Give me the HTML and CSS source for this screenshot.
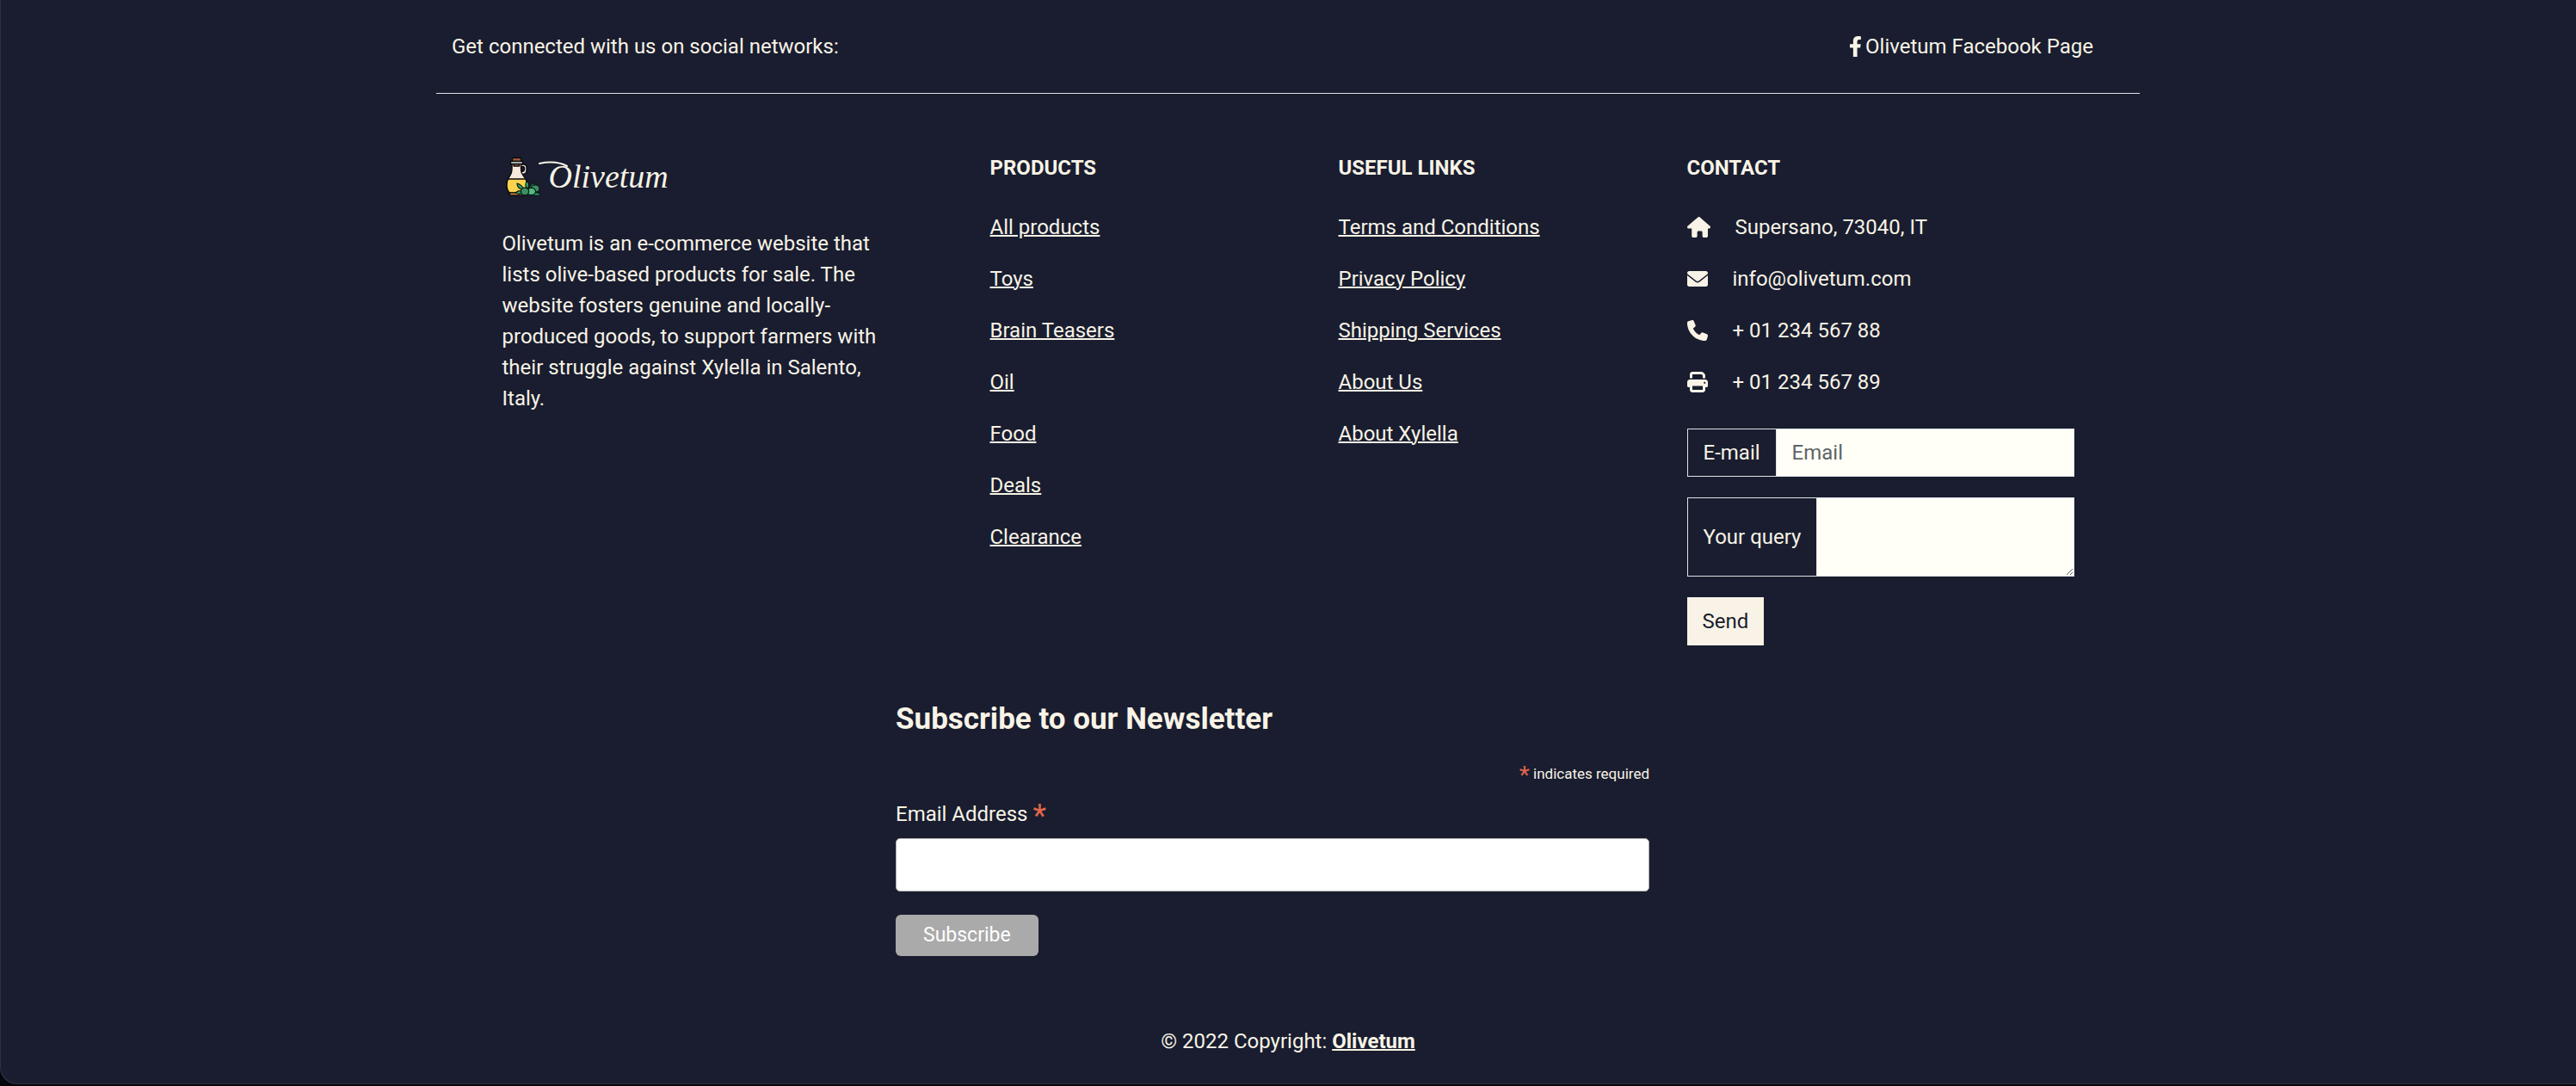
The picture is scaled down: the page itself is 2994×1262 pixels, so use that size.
FILE: index.html
```html
<!DOCTYPE html>
<html lang="en">
<head>
<meta charset="utf-8">
<meta name="viewport" content="width=device-width, initial-scale=1">
<title>Olivetum</title>
<link rel="stylesheet" href="styles.css">
</head>
<body>
<footer class="footer">
  <section class="container social">
    <span>Get connected with us on social networks:</span>
    <a class="social-link" href="#facebook">
      <svg class="icon icon-fb" viewBox="0 0 320 512" aria-hidden="true"><path d="M279.14 288l14.22-92.66h-88.91v-60.13c0-25.35 12.42-50.06 52.24-50.06h40.42V6.26S260.43 0 225.36 0c-73.22 0-121.08 44.38-121.08 124.72v70.62H22.89V288h81.39v224h100.17V288z"/></svg>
      <span>Olivetum Facebook Page</span>
    </a>
  </section>

  <section class="container columns">
    <div class="column">
      <div class="logo">
        <svg class="logo-mark" viewBox="0 0 48 46" aria-hidden="true">
          <g stroke="#0b0b10" stroke-width="1.4" stroke-linejoin="round">
            <path d="M20 9h4q4 0 4 4v3q0 4-4.500 4.500L21 20v-2.500l2.500-.3q2-.4 2-2.200v-1.500q0-2-2-2H20z" fill="#f7e9dc"/>
            <path d="M11 8v7q0 4-2.500 7.500Q5 27 5 33q0 6 3.500 10h17Q28.500 39 28.500 33q0-6-4-10.500Q21.500 19 21.500 15V8z" fill="#f7e9dc"/>
            <path d="M6.500 26Q5 29 5 33q0 6 3.500 9.500h16.500Q28.500 39 28.500 33q0-4-1.500-7z" fill="#fbd34f"/>
            <path d="M8.500 42h17v3h-17z" fill="#e0983f"/>
            <path d="M13 8h6.500v3H13zM11.500 1.500h10V5.500h-10z" fill="#a8613d"/>
            <path d="M9.500 5.500h14V8.500h-14z" fill="#d9e2de"/>
          </g>
          <g stroke="#0b1a14" stroke-width="1.200" stroke-linejoin="round">
            <path d="M17 31q6 2 8 7-8 0-8-7zM28.500 28q4 4 .5 10-4-5-.5-10zM15 42q5-4 10-1-4 4-10 1zM37 30.500q-6 2-6 8 6-2 6-8zM36 42.500q6-2 9 2.500h-9z" fill="#2ea56e"/>
            <ellipse cx="38" cy="37" rx="5" ry="4.200" fill="#3f8d62"/>
            <ellipse cx="33.500" cy="40.500" rx="5" ry="4.200" fill="#52bb83"/>
            <ellipse cx="26" cy="40.500" rx="4.600" ry="4.400" fill="#3f8d62"/>
          </g>
        </svg>
        <svg class="logo-swash" viewBox="0 0 34 12" aria-hidden="true"><path d="M1 4Q20 0 33 7" fill="none" stroke="#f8f3e6" stroke-width="2" stroke-linecap="round"/></svg>
        <span class="logo-name">Olivetum</span>
      </div>
      <p>Olivetum is an e-commerce website that lists olive-based products for sale. The website fosters genuine and locally-produced goods, to support farmers with their struggle against Xylella in Salento, Italy.</p>
    </div>

    <nav class="column" aria-label="Products">
      <h6>PRODUCTS</h6>
      <p><a href="#all">All products</a></p>
      <p><a href="#toys">Toys</a></p>
      <p><a href="#brain">Brain Teasers</a></p>
      <p><a href="#oil">Oil</a></p>
      <p><a href="#food">Food</a></p>
      <p><a href="#deals">Deals</a></p>
      <p><a href="#clearance">Clearance</a></p>
    </nav>

    <nav class="column" aria-label="Useful links">
      <h6>USEFUL LINKS</h6>
      <p><a href="#terms">Terms and Conditions</a></p>
      <p><a href="#privacy">Privacy Policy</a></p>
      <p><a href="#shipping">Shipping Services</a></p>
      <p><a href="#about">About Us</a></p>
      <p><a href="#xylella">About Xylella</a></p>
    </nav>

    <div class="column">
      <h6>CONTACT</h6>
      <p class="contact"><svg class="icon icon-home" viewBox="0 0 576 512" aria-hidden="true"><path d="M575.800 255.500c0 18-15 32.100-32 32.100h-32l.7 160.200c0 2.700-.2 5.400-.5 8.100V472c0 22.100-17.900 40-40 40h-56c-22.100 0-40-17.900-40-40v-88c0-17.700-14.300-32-32-32h-64c-17.700 0-32 14.300-32 32v88c0 22.100-17.900 40-40 40h-56c-22.100 0-40-17.900-40-40V287.600H32c-18 0-32-14-32-32.100 0-9 3-17 10-24L266.400 8c7-7 15-8 22-8s15 2 21 7l255.400 224.500c8 7 12 15 11 24z"/></svg><span>Supersano, 73040, IT</span></p>
      <p class="contact"><svg class="icon" viewBox="0 0 512 512" aria-hidden="true"><path d="M256 352c-16.500 0-33-5.500-47-16.400L0 173.200V400c0 26.500 21.500 48 48 48h416c26.500 0 48-21.500 48-48V173.200L303 335.600C289 346.500 272.500 352 256 352zM16.300 145.300l212.200 165.100c16.200 12.600 38.700 12.600 54.900 0l212.200-165.100c10.200-8 16.400-20.300 16.400-33.300 0-26.500-21.500-48-48-48H48C21.500 64 0 85.500 0 112c0 13 6 25.300 16.300 33.300z"/></svg><span>info@olivetum.com</span></p>
      <p class="contact"><svg class="icon" viewBox="0 0 512 512" aria-hidden="true"><path d="M164.900 24.600c-7.700-18.600-28-28.500-47.400-23.200l-88 24C12.100 30.200 0 46 0 64c0 247.400 200.600 448 448 448 18 0 33.800-12.100 38.600-29.500l24-88c5.300-19.400-4.600-39.700-23.200-47.400l-96-40c-16.300-6.800-35.200-2.100-46.300 11.600L304.700 368C234.300 334.700 177.300 277.700 144 207.300l49.300-40.300c13.700-11.200 18.400-30 11.600-46.300l-40-96z"/></svg><span>+ 01 234 567 88</span></p>
      <p class="contact"><svg class="icon" viewBox="0 0 512 512" aria-hidden="true"><path fill-rule="evenodd" d="M128 0C92.700 0 64 28.700 64 64v96h64V64h226.700L384 93.300V160h64V93.300c0-17-6.700-33.300-18.700-45.300L400 18.700C388 6.700 371.700 0 354.700 0zM384 352v96H128v-96zm64 32h32c17.700 0 32-14.300 32-32v-96c0-35.300-28.700-64-64-64H64c-35.300 0-64 28.700-64 64v96c0 17.700 14.300 32 32 32h32v64c0 35.300 28.700 64 64 64h256c35.300 0 64-28.700 64-64zM432 248a24 24 0 1 1 0 48 24 24 0 1 1 0-48z"/></svg><span>+ 01 234 567 89</span></p>
      <form class="query-form">
        <div class="input-group">
          <label for="contact-email">E-mail</label>
          <input id="contact-email" type="email" placeholder="Email">
        </div>
        <div class="input-group">
          <label for="contact-query">Your query</label>
          <textarea id="contact-query" rows="2"></textarea>
        </div>
        <button class="send" type="button">Send</button>
      </form>
    </div>
  </section>

  <form class="newsletter">
    <h2>Subscribe to our Newsletter</h2>
    <div class="required-note"><span class="asterisk">*</span> indicates required</div>
    <label for="newsletter-email">Email Address <span class="asterisk">*</span></label>
    <input id="newsletter-email" type="email">
    <button class="subscribe" type="button">Subscribe</button>
  </form>

  <div class="copyright">© 2022 Copyright: <a href="#home">Olivetum</a></div>
</footer>
</body>
</html>
```
FILE: styles.css
```css
* {
  box-sizing: border-box;
}

body {
  margin: 0;
  background: #05070d;
  color: #f8f3e6;
  font: 24px/36px Roboto, "Liberation Sans", sans-serif;
}

h2,
h6,
p {
  margin: 0;
}

a {
  color: inherit;
  text-decoration-thickness: 2px;
}

input,
textarea,
button {
  font: inherit;
}

.footer {
  background: #191d2f;
  box-shadow: inset 1px -1px #2c3042;
  border-bottom-left-radius: 20px;
  margin-bottom: 2px;
}

.container {
  width: 100%;
  max-width: 1980px;
  margin: 0 auto;
}

.social {
  display: flex;
  justify-content: space-between;
  padding: 36px 54px 36px 18px;
  border-bottom: 1px solid #dee2e6;
}

.social-link {
  display: flex;
  align-items: center;
  gap: 4px;
  text-decoration: none;
}

.icon {
  width: 24px;
  height: 24px;
  fill: currentColor;
}

.icon-fb {
  width: 15px;
}

.icon-home {
  width: 27px;
}

.columns {
  display: grid;
  grid-template-columns: 25% 16.667% 16.667% 25%;
  justify-content: space-around;
  padding: 72px 18px 0;
}

.column {
  display: flex;
  flex-direction: column;
  gap: 24px;
  padding: 0 18px;
}

h6 {
  margin-bottom: 12px;
  font-size: 24px;
  line-height: 29px;
  font-weight: 700;
}

.logo {
  display: flex;
  align-items: center;
  height: 48px;
  margin-bottom: 12px;
}

.logo-mark {
  width: 48px;
  height: 46px;
}

.logo-swash {
  width: 34px;
  height: 12px;
  align-self: flex-start;
  margin: 5px -22px 0 -6px;
}

.logo-name {
  font: italic 38px/40px "Liberation Serif", serif;
}

.contact {
  display: flex;
  align-items: center;
  gap: 29px;
}

.query-form {
  display: flex;
  flex-direction: column;
  align-items: flex-start;
  gap: 24px;
  padding-top: 12px;
}

.input-group {
  display: flex;
  width: 100%;
  border: 1px solid #dee2e6;
}

.input-group label {
  display: flex;
  align-items: center;
  padding: 9px 18px;
  border-right: 1px solid #dee2e6;
  white-space: nowrap;
}

.input-group input,
.input-group textarea {
  flex: 1;
  min-width: 0;
  margin: 0;
  padding: 9px 18px;
  border: 0;
  border-radius: 0;
  background: #fffff8;
  color: #191d2f;
}

.input-group textarea {
  height: 90px;
  resize: vertical;
}

.input-group input::placeholder {
  color: #5f6468;
}

.send {
  padding: 10px 18px;
  border: 0;
  background: #f8f3e6;
  color: #191d2f;
}

.newsletter {
  display: flex;
  flex-direction: column;
  width: 100%;
  max-width: 912px;
  margin: 0 auto;
  padding: 66px 36px 0 0;
}

.newsletter h2 {
  font-size: 35px;
  line-height: 40px;
  font-weight: 700;
}

.required-note {
  margin-top: 28px;
  font-size: 17px;
  line-height: 30px;
  text-align: right;
}

.asterisk {
  color: #e0654a;
}

.required-note .asterisk {
  font-size: 28px;
  line-height: 24px;
  vertical-align: middle;
}

.newsletter label {
  margin-top: 14px;
}

.newsletter label .asterisk {
  font-size: 36px;
  line-height: 24px;
  vertical-align: middle;
}

.newsletter input {
  height: 62px;
  margin-top: 10px;
  padding: 12px 0;
  border: 1px solid #ababab;
  border-radius: 5px;
  background: #fff;
}

.subscribe {
  align-self: flex-start;
  height: 48px;
  margin-top: 27px;
  padding: 0 32px;
  border: 0;
  border-radius: 6px;
  background: #aaa;
  color: #fff;
  font-size: 23px;
}

.copyright {
  margin-top: 57px;
  padding: 24px 24px 32px;
  text-align: center;
}

.copyright a {
  font-weight: 700;
}
```
